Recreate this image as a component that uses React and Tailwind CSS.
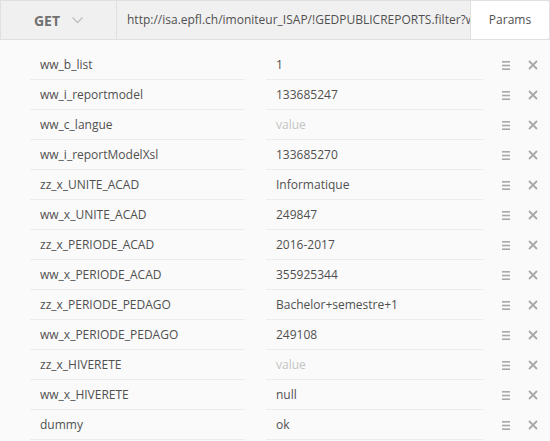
import React from "react";

const params = [
  ["ww_b_list", "1"],
  ["ww_i_reportmodel", "133685247"],
  ["ww_c_langue", ""],
  ["ww_i_reportModelXsl", "133685270"],
  ["zz_x_UNITE_ACAD", "Informatique"],
  ["ww_x_UNITE_ACAD", "249847"],
  ["zz_x_PERIODE_ACAD", "2016-2017"],
  ["ww_x_PERIODE_ACAD", "355925344"],
  ["zz_x_PERIODE_PEDAGO", "Bachelor+semestre+1"],
  ["ww_x_PERIODE_PEDAGO", "249108"],
  ["zz_x_HIVERETE", ""],
  ["ww_x_HIVERETE", "null"],
  ["dummy", "ok"],
];

const ParamRow = ({ name, value }) => (
  <div className="flex items-center h-[30px]">
    <div className="w-[30px] shrink-0" />
    <div className="w-[215px] h-full flex items-center px-[10px] border-b border-[#ececec] text-[#505050]">
      {name}
    </div>
    <div className="w-[21px] shrink-0" />
    <div className="w-[217px] h-full flex items-center px-[10px] border-b border-[#ececec]">
      {value ? (
        <span className="text-[#505050]">{value}</span>
      ) : (
        <span className="text-[#c4c4c4]">value</span>
      )}
    </div>
    <div className="flex-1 flex items-center justify-end pr-[12px] gap-[18px]">
      <svg width="8" height="9" viewBox="0 0 8 9">
        <rect x="0" y="0" width="8" height="1.6" fill="#a8a8a8" />
        <rect x="0" y="3.7" width="8" height="1.6" fill="#a8a8a8" />
        <rect x="0" y="7.4" width="8" height="1.6" fill="#a8a8a8" />
      </svg>
      <svg width="10" height="10" viewBox="0 0 10 10">
        <path d="M1 1 L9 9 M9 1 L1 9" stroke="#a8a8a8" strokeWidth="1.8" />
      </svg>
    </div>
  </div>
);

export default function App() {
  return (
    <div
      className="w-[550px] h-[441px] bg-[#fafafa] overflow-hidden text-[12px]"
      style={{ fontFamily: '"Open Sans", sans-serif' }}
    >
      <div className="flex h-[40px] border border-[#e0e0e0] bg-[#f0f0f0]">
        <div className="w-[116px] shrink-0 flex items-center justify-center gap-[12px] border-r border-[#e0e0e0]">
          <span className="font-bold text-[14px] text-[#707070]">GET</span>
          <svg width="11" height="7" viewBox="0 0 11 7">
            <path d="M0.5 0.5 L5.5 5.5 L10.5 0.5" stroke="#c0c0c0" strokeWidth="1.3" fill="none" />
          </svg>
        </div>
        <div className="flex-1 min-w-0 flex items-center pl-[10px] overflow-hidden whitespace-nowrap text-[#505050]">
          http://isa.epfl.ch/imoniteur_ISAP/!GEDPUBLICREPORTS.filter?ww_b_list=1
        </div>
        <div className="w-[79px] shrink-0 flex items-center justify-center bg-white border-l border-[#e0e0e0] rounded-r-[3px] text-[#505050]">
          Params
        </div>
      </div>
      <div className="pt-[10px]">
        {params.map(([n, v]) => (
          <ParamRow key={n} name={n} value={v} />
        ))}
      </div>
    </div>
  );
}
